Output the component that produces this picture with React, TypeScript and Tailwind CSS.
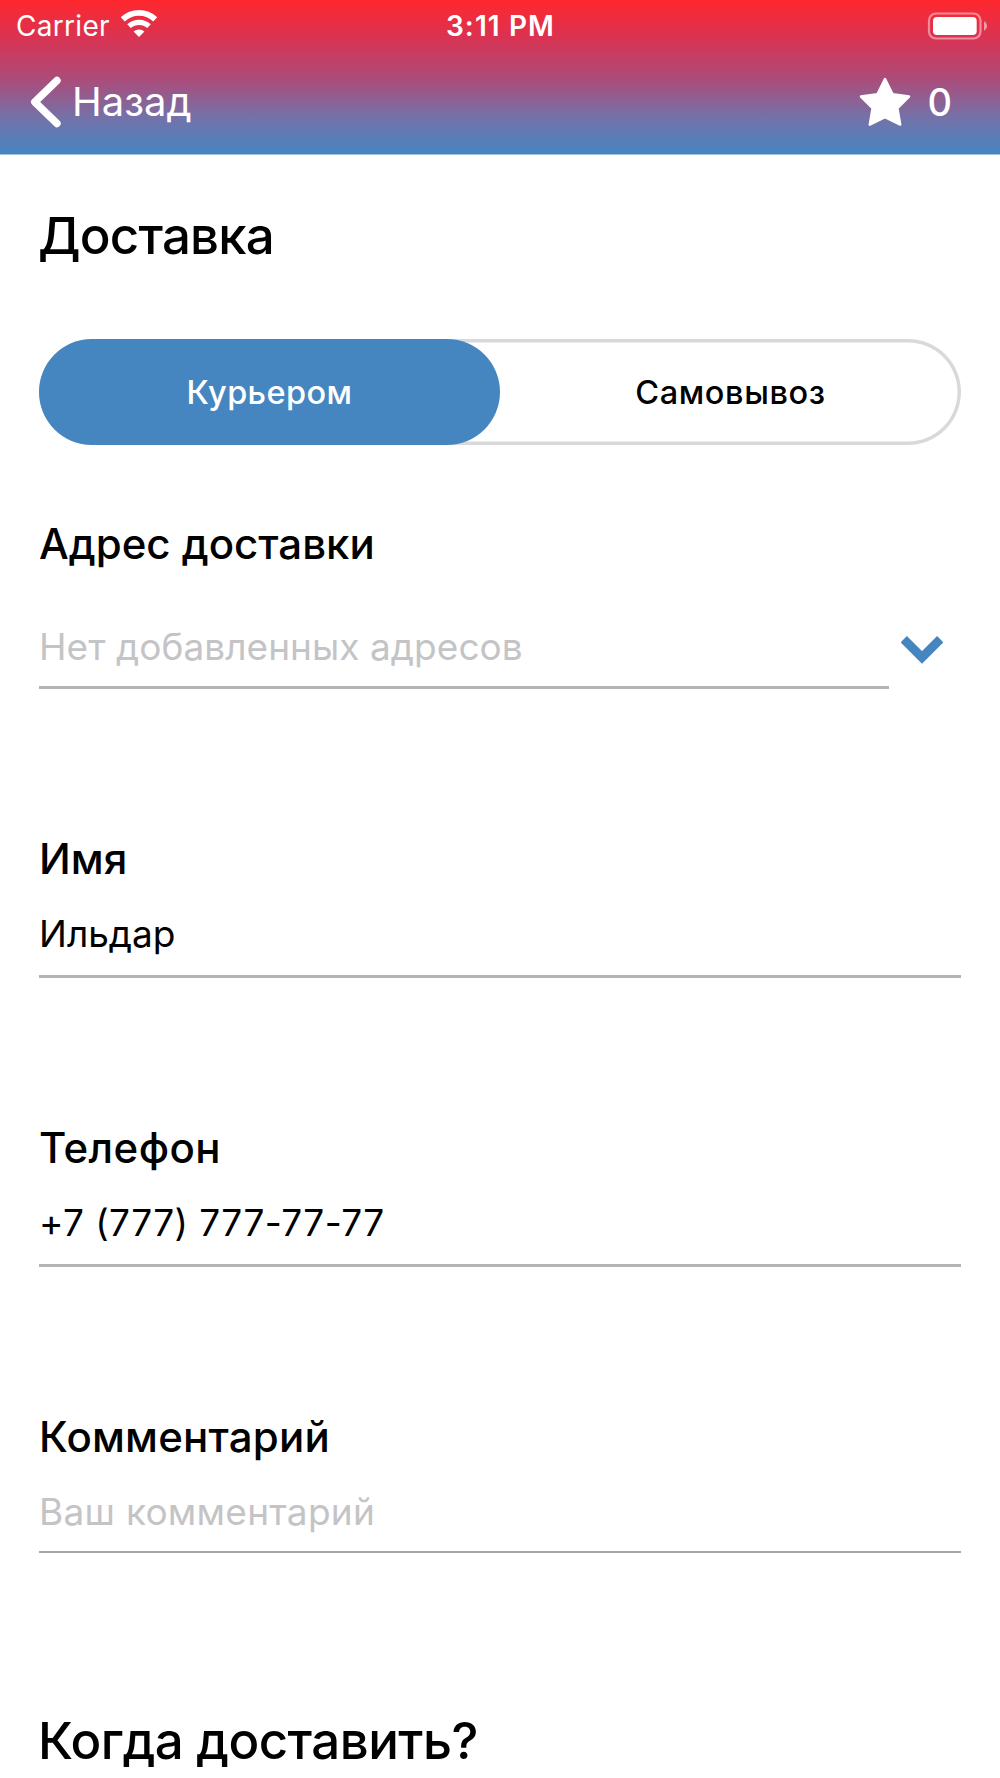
import { useState } from "react";

interface FieldProps {
  label: string;
  value?: string;
  placeholder?: string;
  labelClass?: string;
  textClass?: string;
  className: string;
}

const StatusBar = () => (
  <div className="grid h-[51px] grid-cols-3 items-center pl-[16px] pr-[13px]">
    <div className="flex items-center">
      <span className="text-[28px] leading-[34px] tracking-[0.3px]">Carrier</span>
      <svg className="-mt-1 ml-[11px] h-[27px] w-[36px]" viewBox="0 0 36 27" fill="none">
        <path d="M1.8 9.4a23.6 23.6 0 0 1 32.4 0" stroke="white" strokeWidth="5.8" />
        <path d="M8 16.2a14.8 14.8 0 0 1 20 0" stroke="white" strokeWidth="5.2" />
        <path d="M12.6 21.6a8.2 8.2 0 0 1 10.8 0L18 27z" fill="white" />
      </svg>
    </div>
    <span className="-ml-[2px] text-center text-[28px] font-semibold leading-[34px] tracking-[1.1px]">3:11 PM</span>
    <svg className="ml-auto h-[28px] w-[60px]" viewBox="0 0 60 28" fill="none">
      <rect x="2" y="1.5" width="51.5" height="25" rx="7" stroke="white" strokeOpacity=".45" strokeWidth="2.2" />
      <rect x="6" y="5" width="43.7" height="18" rx="4" fill="white" />
      <path d="M57 9.3c4 1.8 4 7.6 0 9.4z" fill="white" fillOpacity=".5" />
    </svg>
  </div>
);

const NavBar = () => (
  <div className="flex h-[102px] items-center justify-between pl-[30px] pr-[48px]">
    <button className="flex items-center">
      <svg className="h-[52px] w-[32px]" viewBox="0 0 32 52" fill="none">
        <path d="M27 4.5L4.8 26 27 47.5" stroke="white" strokeWidth="7.4" strokeLinecap="round" strokeLinejoin="round" />
      </svg>
      <span className="ml-[10px] text-[40px] leading-[50px]">Назад</span>
    </button>
    <div className="flex items-center">
      <svg className="h-[50px] w-[52px]" viewBox="0 0 52 50">
        <path
          d="M26 2l7.6 15.2L50 19.5 38.4 31.2 41.2 47.6 26 40.2 10.8 47.6 13.6 31.2 2 19.5l16.4-2.3z"
          fill="white"
          stroke="white"
          strokeWidth="2.5"
          strokeLinejoin="round"
        />
      </svg>
      <span className="ml-[16px] text-[38px] font-medium leading-[50px]">0</span>
    </div>
  </div>
);

const Field = ({ label, value, placeholder, labelClass = "", textClass = "", className }: FieldProps) => (
  <div className={`flex flex-col ${className}`}>
    <label className={`self-start whitespace-nowrap text-[42px] font-medium leading-[50px] ${labelClass}`}>{label}</label>
    <span className={`mt-[25px] self-start whitespace-nowrap text-[37px] leading-[50px] ${textClass}`}>
      {value || placeholder}
    </span>
  </div>
);

const App = () => {
  const [courier, setCourier] = useState(true);

  return (
    <div className="h-[1778px] overflow-hidden bg-white font-['Inter',sans-serif] text-black">
      <header className="h-[155px] border-b border-[#a0c2e0] bg-[linear-gradient(to_bottom,#ff272d_0%,#d93353_25%,#aa4d7b_52%,#7571a8_76%,#4586c1_100%)] text-white">
        <StatusBar />
        <NavBar />
      </header>

      <main className="flex flex-col px-[39px] pt-[51px]">
        <h1 className="-ml-px self-start text-[51px] font-medium leading-[60px] tracking-[-0.8px]">Доставка</h1>

        <div className="mt-[73px] flex h-[106px] rounded-full bg-white shadow-[inset_0_0_0_3.5px_#d9d9d9]">
          <button
            onClick={() => setCourier(true)}
            className={`w-1/2 rounded-full pt-[2px] text-[32.5px] font-medium tracking-[0.4px] ${courier ? "bg-[#4586c1] text-white" : ""}`}
          >
            Курьером
          </button>
          <button
            onClick={() => setCourier(false)}
            className={`w-1/2 rounded-full pt-[2px] text-[32.5px] font-medium tracking-[0.6px] ${courier ? "" : "bg-[#4586c1] text-white"}`}
          >
            Самовывоз
          </button>
        </div>

        <h2 className="mt-[74px] self-start whitespace-nowrap text-[42px] font-medium leading-[50px]">Адрес доставки</h2>
        <div className="mt-[53px] flex h-[67px]">
          <div className="w-[850px] border-b-3 border-[#b3b3b3]">
            <span className="whitespace-nowrap text-[37px] leading-[50px] tracking-[0.05px] text-[#c4c4c6]">
              Нет добавленных адресов
            </span>
          </div>
          <svg className="ml-[12px] mt-[14px] h-[28px] w-[42px]" viewBox="0 0 42 28" fill="none">
            <path d="M2.7 3.2L21 21.5 39.3 3.2" stroke="#4586c1" strokeWidth="9" />
          </svg>
        </div>

        <Field label="Имя" value="Ильдар" className="mt-[145px] h-[144px] border-b-3 border-[#b3b3b3]" />
        <Field
          label="Телефон"
          value="+7 (777) 777-77-77"
          labelClass="tracking-[0.4px]"
          textClass="tracking-[0.4px]"
          className="mt-[145px] h-[144px] border-b-3 border-[#b3b3b3]"
        />
        <Field
          label="Комментарий"
          placeholder="Ваш комментарий"
          labelClass="tracking-[0.2px]"
          textClass="tracking-[0.27px] text-[#c4c4c6]"
          className="mt-[145px] h-[141px] border-b-2 border-[#a6a6a6]"
        />

        <h1 className="-ml-px mt-[158px] self-start whitespace-nowrap text-[51px] font-medium leading-[60px] tracking-[-0.55px]">
          Когда доставить?
        </h1>
      </main>
    </div>
  );
};

export default App;
